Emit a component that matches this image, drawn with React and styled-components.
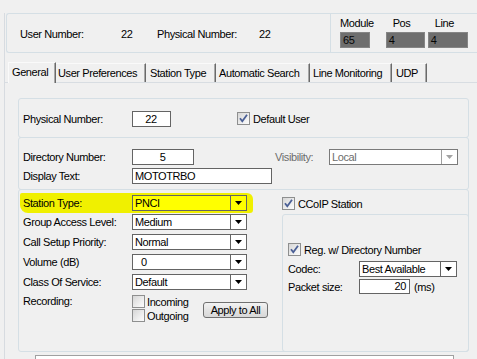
import React from 'react';
import styled, { createGlobalStyle } from 'styled-components';

const GlobalStyle = createGlobalStyle`
  html, body {
    margin: 0;
    padding: 0;
    background: #f0f0f0;
  }
  body {
    font-family: "Liberation Sans", Arial, sans-serif;
    font-size: 11px;
    letter-spacing: -0.4px;
    color: #000;
  }
`;

const Window = styled.div`
  width: 477px;
  height: 359px;
  overflow: hidden;
  box-sizing: border-box;
  padding: 13px 0 0 4px;
`;

const Frame = styled.div`
  border-left: 1px solid #d7dbe0;
  height: 100%;
`;

// Header with user / module info
const Header = styled.div`
  display: flex;
  height: 40px;
  box-sizing: border-box;
  margin-left: 1px;
  border: 1px solid #d5dfe5;
  border-right: none;
  border-radius: 3px 0 0 3px;
`;

const HeaderInfo = styled.div`
  width: 323px;
  display: flex;
  align-items: center;
  padding-left: 13px;
  box-sizing: border-box;
  padding-top: 1px;
`;

const InfoText = styled.span`
  width: ${(p) => p.$w}px;
  flex: none;
  white-space: nowrap;
`;

const HeaderModule = styled.div`
  flex: 1;
  border-left: 1px solid #d5dfe5;
  padding: 2px 0 0 9px;
  display: flex;
`;

const ModuleCell = styled.div`
  display: flex;
  flex-direction: column;
  margin-right: ${(p) => p.$gap}px;
`;

const ModuleLabel = styled.div`
  height: 14px;
  line-height: 14px;
  padding-left: ${(p) => p.$indent}px;
  white-space: nowrap;
`;

const ModuleValue = styled.div`
  width: ${(p) => p.$w}px;
  height: 16px;
  margin-top: 2px;
  box-sizing: border-box;
  background: #6e6e6e;
  border: 1px solid #858585;
  line-height: 14px;
  padding-left: 2px;
  color: #050505;
`;

// Tabs
const TabStrip = styled.div`
  display: flex;
  align-items: flex-end;
  margin: 9px 0 0 3px;
  height: 20px;
`;

const Tab = styled.div`
  width: ${(p) => p.$w}px;
  height: ${(p) => (p.$active ? 21 : 19)}px;
  margin-bottom: ${(p) => (p.$active ? -1 : 0)}px;
  position: relative;
  z-index: ${(p) => (p.$active ? 1 : 0)};
  box-sizing: border-box;
  background: #f0f0f0;
  border-top: 1px solid #fafafa;
  border-left: ${(p) => (p.$first ? '1px solid #fafafa' : 'none')};
  border-right: 1px solid #6a6a6a;
  box-shadow: inset -1px 0 0 #a8a8a8;
  padding-left: ${(p) => p.$pad}px;
  line-height: ${(p) => (p.$active ? 19 : 18)}px;
  white-space: nowrap;
`;

const TabPage = styled.div`
  border-top: 1px solid #d8dde2;
  padding: 15px 0 0 13px;
`;

const Group = styled.div`
  width: 451px;
  height: ${(p) => p.$h}px;
  box-sizing: border-box;
  border: 1px solid #d5dfe5;
  border-radius: 3px;
  margin-top: ${(p) => (p.$first ? 0 : -1)}px;
`;

const TopGroup = styled(Group)`
  display: flex;
  align-items: center;
  padding: 1px 0 0 4px;
`;

const DirGroup = styled(Group)`
  padding: 11px 0 0 4px;
`;

const StationGroup = styled(Group)`
  display: flex;
  padding: 5px 0 0 4px;
`;

const Row = styled.div`
  display: flex;
  align-items: ${(p) => p.$align || 'center'};
  height: ${(p) => p.$h || 16}px;
  margin-top: ${(p) => p.$mt || 0}px;
`;

const Label = styled.span`
  width: ${(p) => p.$w || 109}px;
  flex: none;
  white-space: nowrap;
  color: ${(p) => (p.$disabled ? '#6d6d6d' : '#000')};
  margin-left: ${(p) => p.$ml || 0}px;
`;

const TextBox = styled.div`
  width: ${(p) => p.$w}px;
  height: ${(p) => p.$h || 16}px;
  flex: none;
  box-sizing: border-box;
  border: 1px solid #646464;
  background: #fff;
  line-height: ${(p) => (p.$h || 16) - 2}px;
  padding: 0 3px 0 2px;
  text-align: ${(p) => p.$align || 'left'};
  white-space: nowrap;
`;

const ComboBox = styled.div`
  width: ${(p) => p.$w}px;
  height: 16px;
  flex: none;
  box-sizing: border-box;
  display: flex;
  border: 1px solid ${(p) => (p.$disabled ? '#7a7a7a' : '#646464')};
  background: ${(p) => (p.$highlight ? '#ffff00' : '#fff')};
  color: ${(p) => (p.$disabled ? '#6d6d6d' : '#000')};
`;

const ComboText = styled.span`
  flex: 1;
  line-height: 14px;
  padding-left: ${(p) => p.$indent || 2}px;
  white-space: nowrap;
  overflow: hidden;
`;

const ComboButton = styled.span`
  width: 15px;
  flex: none;
  border-left: 1px solid ${(p) => (p.$disabled ? '#a0a0a0' : '#646464')};
  display: flex;
  align-items: center;
  justify-content: center;
`;

const Highlight = styled.div`
  width: 230px;
  margin: -2px 0 -3px -3px;
  padding: 2px 0 2px 3px;
  background: #f0f000;
  border-radius: 2px 6px 3px 8px;
`;

const LeftColumn = styled.div`
  width: 259px;
  flex: none;
  display: flex;
  flex-direction: column;
  gap: 4px;
`;

const RightColumn = styled.div`
  flex: 1;
  display: flex;
  flex-direction: column;
  margin: 0 -1px -1px 0;
`;

const CheckLine = styled.label`
  display: flex;
  align-items: center;
  gap: ${(p) => p.$gap || 3}px;
  height: 13px;
  white-space: nowrap;
  margin-left: ${(p) => p.$ml || 0}px;
  margin-top: ${(p) => p.$mt || 0}px;
`;

const Box = styled.span`
  width: 13px;
  height: 13px;
  flex: none;
  box-sizing: border-box;
  border: 1px solid #8e8f8f;
  background: linear-gradient(135deg, #d6d6d6 0%, #f2f2f2 70%, #fbfbfb 100%);
  display: flex;
  align-items: center;
  justify-content: center;
`;

const CheckStack = styled.div`
  width: 71px;
  flex: none;
  display: flex;
  flex-direction: column;
  gap: 1px;
`;

const ApplyButton = styled.button`
  width: 65px;
  height: 16px;
  margin-top: 7px;
  padding: 0;
  box-sizing: border-box;
  border: 1px solid #707070;
  border-radius: 3px;
  background: linear-gradient(#f3f3f3, #e3e3e3 50%, #d8d8d8);
  font: inherit;
  letter-spacing: inherit;
  color: #000;
  line-height: 13px;
`;

const InnerGroup = styled.div`
  flex: 1;
  margin-top: 4px;
  border: 1px solid #d5dfe5;
  border-radius: 3px;
  padding: 28px 0 0 5px;
`;

const Unit = styled.span`
  margin-left: 4px;
`;

const BottomBox = styled.div`
  width: 419px;
  height: 20px;
  margin: 3px 0 0 17px;
  box-sizing: border-box;
  border: 1px solid #a0a0a0;
  background: #fff;
`;

const Arrow = ({ disabled }) => (
  <svg width="7" height="4" viewBox="0 0 7 4">
    <polygon points="0,0 7,0 3.5,4" fill={disabled ? '#a3a3a3' : '#000'} />
  </svg>
);

const CheckBox = ({ checked, label, ...rest }) => (
  <CheckLine {...rest}>
    <Box>
      {checked && (
        <svg width="11" height="11" viewBox="0 0 11 11">
          <path d="M2 5.2 L4.3 8.2 L9 1.8" fill="none" stroke="#4a5f95" strokeWidth="1.8" />
        </svg>
      )}
    </Box>
    {label}
  </CheckLine>
);

const Combo = ({ value, width, highlight, disabled, indent }) => (
  <ComboBox $w={width} $highlight={highlight} $disabled={disabled}>
    <ComboText $indent={indent}>{value}</ComboText>
    <ComboButton $disabled={disabled}>
      <Arrow disabled={disabled} />
    </ComboButton>
  </ComboBox>
);

const tabs = [
  { name: 'General', w: 48, pad: 3 },
  { name: 'User Preferences', w: 90, pad: 2 },
  { name: 'Station Type', w: 70, pad: 4 },
  { name: 'Automatic Search', w: 94, pad: 3 },
  { name: 'Line Monitoring', w: 82, pad: 3 },
  { name: 'UDP', w: 35, pad: 4 },
];

const modules = [
  { label: 'Module', value: '65', w: 30, indent: 0, gap: 12 },
  { label: 'Pos', value: '4', w: 39, indent: 7, gap: 3 },
  { label: 'Line', value: '4', w: 40, indent: 7, gap: 0 },
];

const settings = [
  { label: 'Group Access Level:', value: 'Medium' },
  { label: 'Call Setup Priority:', value: 'Normal' },
  { label: 'Volume (dB)', value: '0', indent: 8 },
  { label: 'Class Of Service:', value: 'Default' },
];

const App = () => (
  <>
    <GlobalStyle />
    <Window>
      <Frame>
        <Header>
          <HeaderInfo>
            <InfoText $w={101}>User Number:</InfoText>
            <InfoText $w={36}>22</InfoText>
            <InfoText $w={102}>Physical Number:</InfoText>
            <InfoText $w={30}>22</InfoText>
          </HeaderInfo>
          <HeaderModule>
            {modules.map((m) => (
              <ModuleCell key={m.label} $gap={m.gap}>
                <ModuleLabel $indent={m.indent}>{m.label}</ModuleLabel>
                <ModuleValue $w={m.w}>{m.value}</ModuleValue>
              </ModuleCell>
            ))}
          </HeaderModule>
        </Header>

        <TabStrip>
          {tabs.map((t, i) => (
            <Tab key={t.name} $w={t.w} $pad={t.pad} $active={i === 0} $first={i === 0}>
              {t.name}
            </Tab>
          ))}
        </TabStrip>

        <TabPage>
          <TopGroup $first $h={40}>
            <Label>Physical Number:</Label>
            <TextBox $w={39} $align="center">22</TextBox>
            <CheckBox checked label="Default User" $ml={66} />
          </TopGroup>

          <DirGroup $h={53}>
            <Row>
              <Label>Directory Number:</Label>
              <TextBox $w={62} $align="center">5</TextBox>
              <Label $w={54} $ml={81} $disabled>Visibility:</Label>
              <Combo value="Local" width={129} disabled />
            </Row>
            <Row $mt={3}>
              <Label>Display Text:</Label>
              <TextBox $w={140}>MOTOTRBO</TextBox>
            </Row>
          </DirGroup>

          <StationGroup $h={163}>
            <LeftColumn>
              <Highlight>
                <Row>
                  <Label>Station Type:</Label>
                  <Combo value="PNCI" width={115} highlight />
                </Row>
              </Highlight>
              {settings.map((s) => (
                <Row key={s.label}>
                  <Label>{s.label}</Label>
                  <Combo value={s.value} width={115} indent={s.indent} />
                </Row>
              ))}
              <Row $align="flex-start" $h={28} $mt={1}>
                <Label>Recording:</Label>
                <CheckStack>
                  <CheckBox label="Incoming" $gap={2} />
                  <CheckBox label="Outgoing" $gap={2} />
                </CheckStack>
                <ApplyButton>Apply to All</ApplyButton>
              </Row>
            </LeftColumn>

            <RightColumn>
              <CheckBox checked label="CCoIP Station" $mt={2} />
              <InnerGroup>
                <CheckBox checked label="Reg. w/ Directory Number" />
                <Row $mt={5}>
                  <Label $w={71}>Codec:</Label>
                  <Combo value="Best Available" width={98} />
                </Row>
                <Row $mt={2} $h={15}>
                  <Label $w={71}>Packet size:</Label>
                  <TextBox $w={51} $h={15} $align="right">20</TextBox>
                  <Unit>(ms)</Unit>
                </Row>
              </InnerGroup>
            </RightColumn>
          </StationGroup>

          <BottomBox />
        </TabPage>
      </Frame>
    </Window>
  </>
);

export default App;
